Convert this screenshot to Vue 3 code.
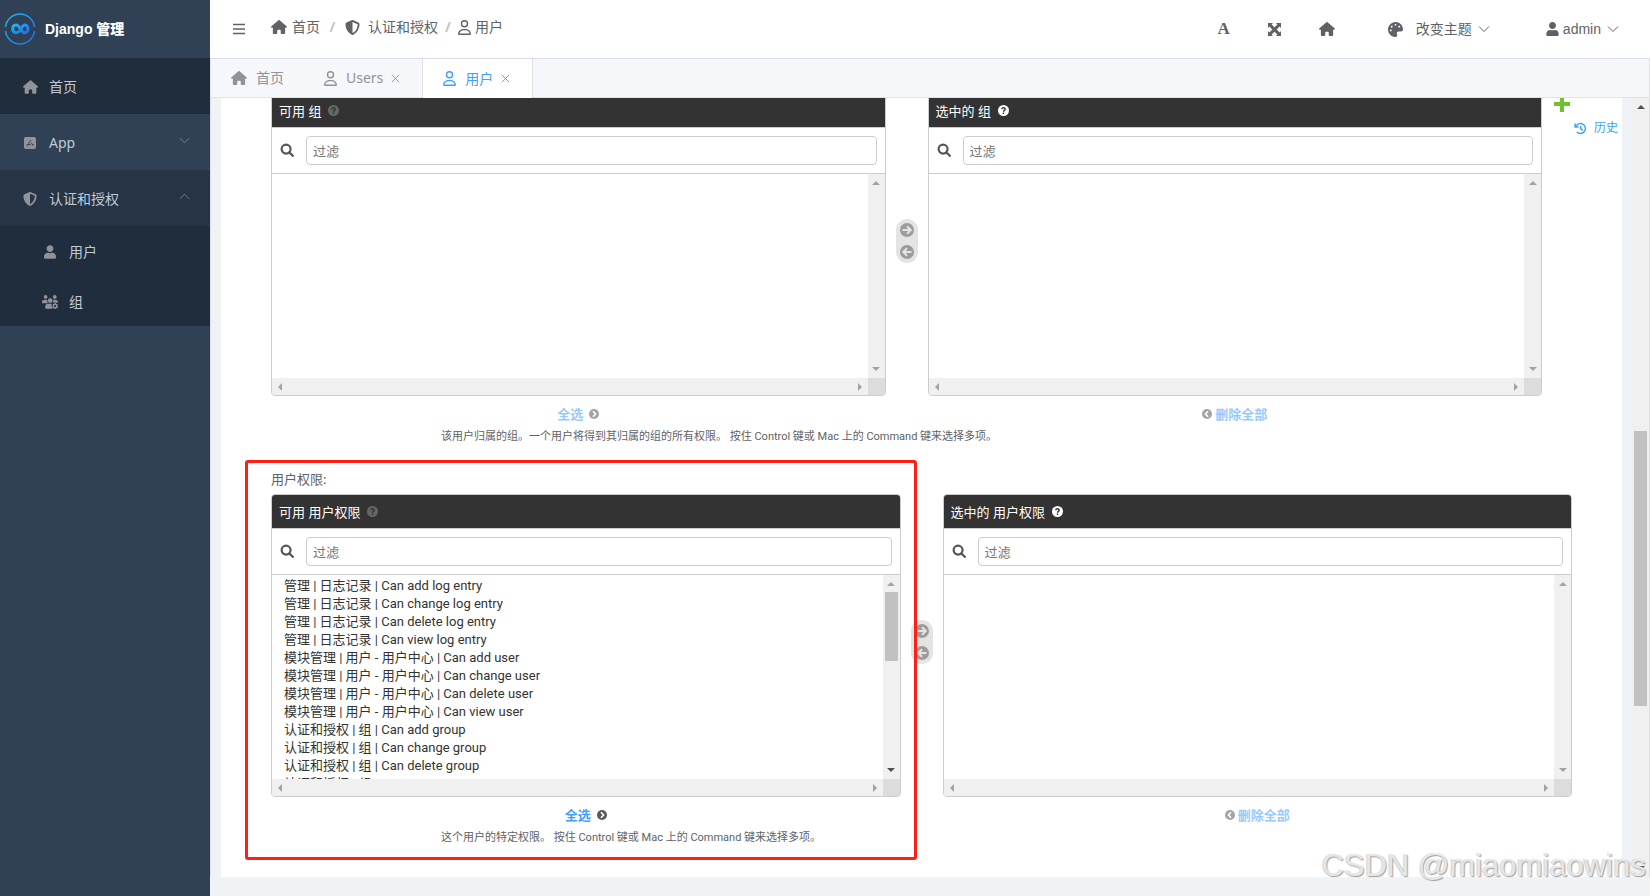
<script setup>
import { ref, h } from 'vue'

const shapes = {
  home: ['0 0 576 512', 'M575.8 255.5c0 18-15 32.1-32 32.1h-32l.7 160.2c0 2.7-.2 5.4-.5 8.1V472c0 22.1-17.9 40-40 40H456c-1.1 0-2.2 0-3.3-.1c-1.4 .1-2.8 .1-4.2 .1H416 392c-22.1 0-40-17.9-40-40V448 384c0-17.7-14.3-32-32-32H256c-17.7 0-32 14.3-32 32v64 24c0 22.1-17.9 40-40 40H160 128.1c-1.5 0-3-.1-4.5-.2c-1.2 .1-2.4 .2-3.6 .2H104c-22.1 0-40-17.9-40-40V360c0-.9 0-1.9 .1-2.8V287.6H32c-18 0-32-14-32-32.1c0-9 3-17 10-24L266.4 8c7-7 15-8 22-8s15 2 21 7L564.8 231.5c8 7 12 15 11 24z'],
  user: ['0 0 448 512', 'M224 256c70.7 0 128-57.3 128-128S294.7 0 224 0 96 57.3 96 128s57.3 128 128 128zm89.6 32h-16.7c-22.2 10.2-46.9 16-72.9 16s-50.6-5.8-72.9-16h-16.7C60.2 288 0 348.2 0 422.4V464c0 26.5 21.5 48 48 48h352c26.5 0 48-21.5 48-48v-41.6c0-74.2-60.2-134.4-134.4-134.4z'],
  person: ['0 0 448 512', 'M304 128a80 80 0 1 0-160 0 80 80 0 1 0 160 0zM96 128a128 128 0 1 1 256 0A128 128 0 1 1 96 128zM49.3 464H398.7c-8.9-63.3-63.3-112-129-112H178.3c-65.7 0-120.1 48.7-129 112zM0 482.3C0 383.8 79.8 304 178.3 304h91.4C368.2 304 448 383.8 448 482.3c0 16.4-13.3 29.7-29.7 29.7H29.7C13.3 512 0 498.7 0 482.3z'],
  shield: ['0 0 512 512', 'M256 0c4.6 0 9.2 1 13.4 2.9L457.7 82.8c22 9.3 38.4 31 38.3 57.2c-.5 99.2-41.3 280.7-213.6 363.2c-16.7 8-36.1 8-52.8 0C57.3 420.7 16.5 239.2 16 140c-.1-26.2 16.3-47.9 38.3-57.2L242.7 2.9C246.8 1 251.4 0 256 0zm0 66.8V444.8C394 378 431.1 230.1 432 141.4L256 66.8z'],
  palette: ['0 0 512 512', 'M204.3 5C104.9 24.4 24.8 104.3 5.2 203.4c-37 187 131.7 326.4 258.8 306.7 41.2-6.4 61.4-54.6 42.5-91.7-23.1-45.4 9.9-98.4 60.9-98.4h79.7c35.8 0 64.8-29.6 64.9-65.3C511.5 97.1 368.1-26.9 204.3 5zM96 320c-17.7 0-32-14.3-32-32s14.3-32 32-32 32 14.3 32 32-14.3 32-32 32zm32-128c-17.7 0-32-14.3-32-32s14.3-32 32-32 32 14.3 32 32-14.3 32-32 32zm128-64c-17.7 0-32-14.3-32-32s14.3-32 32-32 32 14.3 32 32-14.3 32-32 32zm128 64c-17.7 0-32-14.3-32-32s14.3-32 32-32 32 14.3 32 32-14.3 32-32 32z'],
  expand: ['0 0 14 14', 'M0 0H5.4L3.9 1.5 7 4.6 10.1 1.5 8.6 0H14V5.4L12.5 3.9 9.4 7 12.5 10.1 14 8.6V14H8.6L10.1 12.5 7 9.4 3.9 12.5 5.4 14H0V8.6L1.5 10.1 4.6 7 1.5 3.9 0 5.4Z'],
  group: ['0 0 16 14', 'M3.6 0a1.9 1.9 0 1 1 0 3.8a1.9 1.9 0 1 1 0-3.8zM12.8 0a1.9 1.9 0 1 1 0 3.8a1.9 1.9 0 1 1 0-3.8zM8.2 3.2a2.4 2.4 0 1 1 0 4.8a2.4 2.4 0 1 1 0-4.8zM2.4 4.8H4.8L5.4 5.2C5 6.600 5.600 7.600 6 8.200H0.500C0 8.200 0 7.900 0 7.500A2.500 2.500 0 0 1 2.400 4.800zM11.400 4.800H13.600A2.500 2.500 0 0 1 16 7.200L14.600 8 13 7.300 11.200 8 10.700 8C11.400 7 11.400 6 11.100 5.200zM6.400 8.800H9.800L9.400 10.400 10.600 13.800H4C3.500 13.800 3.200 13.500 3.200 13V12A3.200 3.200 0 0 1 6.400 8.800zM12.500 8H13.700L14 9 15.200 9 16 10.200 15.400 11.100 16 12 15.200 13.200 14 13.200 13.700 14H12.500L12.200 13.200 11 13.200 10.300 12 10.900 11.100 10.300 10.200 11 9 12.200 9zM13.100 10a1.100 1.100 0 1 0 0 2.200a1.100 1.100 0 1 0 0-2.200z'],
  store: ['0 0 14 14', 'M2 0H12A2 2 0 0 1 14 2V12A2 2 0 0 1 12 14H2A2 2 0 0 1 0 12V2A2 2 0 0 1 2 0zM6.500 3.300L7 4.600 4.500 8.600H2.800V9.500H8.200L7.700 8.600H5.600L8 4.400 7.600 3.300 7.200 3.800zM8.600 6L8.200 7 10 10.300 10.800 10 10.300 9.500H11.300V8.600H9.900zM3.700 10.100L3.300 11 4 11 4.500 10.100z']
}
const strokes = {
  menu: ['0 0 12 12', 'M0 1.500H12M0 6H12M0 10.500H12', 1.4],
  down: ['0 0 12 12', 'M1 3.500L6 8.500L11 3.500', 1],
  up: ['0 0 12 12', 'M1 8.500L6 3.500L11 8.500', 1],
  close: ['0 0 12 12', 'M2 2L10 10M10 2L2 10', 1],
  search: ['0 0 16 16', 'M6.500 1.700a4.800 4.800 0 1 0 0 9.600a4.800 4.800 0 1 0 0-9.600M10 10L14.400 14.400', 2.300],
  history: ['0 0 14 14', 'M2.300 4.200A5.400 5.400 0 1 1 3 10.800M1.200 1.600V5.300H5M7.300 4.200V7.400L9.400 9', 1.600]
}

const Icon = (props) => {
  const size = { width: props.w, height: props.ht || props.w, 'aria-hidden': 'true' }
  const s = strokes[props.name]
  if (s) return h('svg', { ...size, viewBox: s[0] }, [h('path', { d: s[1], fill: 'none', stroke: 'currentColor', 'stroke-width': s[2] })])
  const f = shapes[props.name]
  return h('svg', { ...size, viewBox: f[0] }, [h('path', { d: f[1], fill: 'currentColor', 'fill-rule': 'evenodd' })])
}
Icon.props = ['name', 'w', 'ht']

const permissions = [
  '管理 | 日志记录 | Can add log entry',
  '管理 | 日志记录 | Can change log entry',
  '管理 | 日志记录 | Can delete log entry',
  '管理 | 日志记录 | Can view log entry',
  '模块管理 | 用户 - 用户中心 | Can add user',
  '模块管理 | 用户 - 用户中心 | Can change user',
  '模块管理 | 用户 - 用户中心 | Can delete user',
  '模块管理 | 用户 - 用户中心 | Can view user',
  '认证和授权 | 组 | Can add group',
  '认证和授权 | 组 | Can change group',
  '认证和授权 | 组 | Can delete group',
  '认证和授权 | 组 | Can view group'
]

const fields = ref([
  {
    key: 'groups', label: '', addable: true, active: false,
    help: '该用户归属的组。一个用户将得到其归属的组的所有权限。 按住 Control 键或 Mac 上的 Command 键来选择多项。',
    panels: [
      { id: 'groups-from', title: '可用 组', dim: true, options: [] },
      { id: 'groups-to', title: '选中的 组', dim: false, options: [] }
    ]
  },
  {
    key: 'perms', label: '用户权限:', addable: false, active: true,
    help: '这个用户的特定权限。 按住 Control 键或 Mac 上的 Command 键来选择多项。',
    panels: [
      { id: 'perms-from', title: '可用 用户权限', dim: true, options: permissions },
      { id: 'perms-to', title: '选中的 用户权限', dim: false, options: [] }
    ]
  }
])
</script>

<template>
  <div class="shell">
    <aside class="sidebar">
      <div class="brand">
        <svg width="32" height="32" viewBox="0 0 32 32" aria-hidden="true">
          <defs>
            <linearGradient id="brandFill" x1="0" y1="0" x2="1" y2="1">
              <stop offset="0" stop-color="#1fb6f5" />
              <stop offset="1" stop-color="#2070ea" />
            </linearGradient>
          </defs>
          <g fill="none" stroke="url(#brandFill)">
            <path d="M1.500 14A14.600 14.600 0 0 1 30.500 14M30.500 18A14.600 14.600 0 0 1 1.500 18" stroke-width="1.500" />
            <path d="M14.500 13.200C13 11.500 9 11.200 8.700 15.500C8.700 20.500 13.500 20.800 15.800 17.500C18 13.800 19 12 21 12C25 12 25 20 20.500 19.800C17.500 19.500 16.500 14.500 14 13" stroke-width="3" />
          </g>
        </svg>
        <strong>Django 管理</strong>
      </div>
      <nav class="menu">
        <a href="#home" class="item first"><span class="ico"><Icon name="home" w="15" ht="14" /></span>首页</a>
        <a href="#app" class="item"><span class="ico"><Icon name="store" w="12" /></span>App<Icon class="caret" name="down" w="11" /></a>
        <a href="#auth" class="item open"><span class="ico"><Icon name="shield" w="14" /></span>认证和授权<Icon class="caret" name="up" w="11" /></a>
        <a href="#users" class="item sub"><span class="ico"><Icon name="user" w="12" ht="14" /></span>用户</a>
        <a href="#groups" class="item sub"><span class="ico"><Icon name="group" w="16" ht="14" /></span>组</a>
      </nav>
    </aside>

    <div class="main">
      <header class="topbar">
        <button class="plain" aria-label="menu"><Icon name="menu" w="12" /></button>
        <nav class="crumbs">
          <a href="#home"><Icon name="home" w="16" ht="14" />首页</a>
          <span class="slash">/</span>
          <a href="#auth" class="wide"><Icon name="shield" w="15" />认证和授权</a>
          <span class="slash">/</span>
          <a href="#users" class="tight"><Icon name="person" w="13" ht="15" />用户</a>
        </nav>
        <div class="tools">
          <button class="plain letter" aria-label="font">A</button>
          <button class="plain" aria-label="fullscreen"><Icon name="expand" w="13" /></button>
          <button class="plain" aria-label="home"><Icon name="home" w="16" ht="14" /></button>
          <button class="plain theme"><Icon name="palette" w="15" /><span>改变主题</span><Icon name="down" w="12" /></button>
          <button class="plain account"><Icon name="user" w="13" ht="14" /><span>admin</span><Icon name="down" w="12" /></button>
        </div>
      </header>

      <nav class="tabs">
        <a href="#home" class="tab"><Icon name="home" w="16" ht="14" />首页</a>
        <a href="#list" class="tab"><Icon name="person" w="13" ht="15" />Users<Icon class="x" name="close" w="11" /></a>
        <a href="#users" class="tab active"><Icon name="person" w="13" ht="15" />用户<Icon class="x" name="close" w="11" /></a>
      </nav>

      <div class="frame">
        <div class="viewport">
          <form class="sheet" @submit.prevent>
            <a href="#history" class="history"><Icon name="history" w="13" />历史</a>
            <section v-for="f in fields" :key="f.key" class="field">
              <div v-if="f.label" class="label">{{ f.label }}</div>
              <div class="pair">
                <template v-for="(p, i) in f.panels" :key="p.id">
                  <div v-if="i === 1" class="chooser">
                    <button type="button" aria-label="add">
                      <svg width="14" height="14" viewBox="0 0 14 14"><circle cx="7" cy="7" r="7" fill="#9c9c9c" /><path d="M2.500 7H10.500M7 3.200L10.800 7L7 10.800" fill="none" stroke="#e4e4e4" stroke-width="2" /></svg>
                    </button>
                    <button type="button" aria-label="remove">
                      <svg width="14" height="14" viewBox="0 0 14 14"><circle cx="7" cy="7" r="7" fill="#9c9c9c" /><path d="M11.500 7H3.500M7 3.200L3.200 7L7 10.800" fill="none" stroke="#e4e4e4" stroke-width="2" /></svg>
                    </button>
                  </div>
                  <div class="column">
                    <div class="panel">
                      <h2>
                        {{ p.title }}
                        <svg class="help-dot" :class="{ dim: p.dim }" width="11" height="11" viewBox="0 0 12 12" aria-hidden="true">
                          <circle cx="6" cy="6" r="6" fill="currentColor" />
                          <path d="M4.200 4.700C4.200 2.300 7.900 2.500 7.800 4.600C7.800 5.900 6 5.800 6 7.300M6 8.300V9.800" fill="none" stroke="#333" stroke-width="1.500" />
                        </svg>
                      </h2>
                      <div class="filter">
                        <label :for="p.id + '-filter'" :aria-label="p.title"><Icon name="search" w="15" /></label>
                        <input :id="p.id + '-filter'" type="text" placeholder="过滤" />
                      </div>
                      <div class="list">
                        <select multiple :aria-label="p.title">
                          <option v-for="o in p.options" :key="o">{{ o }}</option>
                        </select>
                        <div class="vbar">
                          <i class="tri t-up"></i>
                          <div v-if="p.options.length" class="thumb"></div>
                          <i class="tri t-down" :class="{ dark: p.options.length }"></i>
                        </div>
                        <div class="hbar"><i class="tri t-left"></i><i class="tri t-right"></i></div>
                        <div class="corner"></div>
                      </div>
                    </div>
                    <a v-if="i === 0" href="#all" class="bulk" :class="{ off: !f.active }">全选
                      <svg width="10" height="10" viewBox="0 0 10 10" aria-hidden="true"><circle cx="5" cy="5" r="5" fill="#5a5a5a" /><path d="M4 2.300L6.600 5L4 7.700" fill="none" stroke="#fff" stroke-width="1.600" /></svg>
                    </a>
                    <a v-else href="#none" class="bulk clear off">
                      <svg width="10" height="10" viewBox="0 0 10 10" aria-hidden="true"><circle cx="5" cy="5" r="5" fill="#5a5a5a" /><path d="M6 2.300L3.400 5L6 7.700" fill="none" stroke="#fff" stroke-width="1.600" /></svg>
                      删除全部</a>
                  </div>
                </template>
                <a v-if="f.addable" href="#add" class="plus" aria-label="add">
                  <svg width="16" height="16" viewBox="0 0 16 16"><path d="M6 0H10V6H16V10H10V16H6V10H0V6H6Z" fill="#70bf2b" /></svg>
                </a>
              </div>
              <p class="help">{{ f.help }}</p>
              <div v-if="f.active" class="marker"></div>
            </section>
          </form>
        </div>
        <div class="pagebar">
          <i class="tri t-up dark"></i>
          <div class="page-thumb"></div>
          <i class="tri t-down dark"></i>
        </div>
      </div>
    </div>
    <div class="watermark">CSDN @miaomiaowins</div>
  </div>
</template>

<style>
html, body { background: #f0f3f7; }
</style>

<style scoped>
* { box-sizing: border-box; }
.shell { position: relative; display: flex; height: 100vh; overflow: hidden; font: 14px/20px "Noto Sans", "Noto Sans CJK SC", sans-serif; color: #606266; background: #eff3f6; }
.shell svg { display: block; flex: none; }
a { text-decoration: none; color: inherit; }
.sidebar { width: 210px; flex: none; background: #304156; }
.brand { height: 58px; display: flex; align-items: center; gap: 9px; padding-left: 4px; color: #fff; font: bold 14px/20px "Liberation Sans", "Noto Sans CJK SC", sans-serif; }
.menu { display: flex; flex-direction: column; }
.item { display: flex; align-items: center; height: 56px; padding: 1px 20px 0; color: #bfcbd9; }
.item .ico { width: 20px; margin-right: 9px; display: flex; justify-content: center; color: #909399; }
.item.first { background: #202d3c; }
.item.open { background: #263445; }
.item.sub { height: 50px; padding-left: 40px; background: #1f2d3d; }
.caret { margin: 0 0 4px auto; color: #7d8896; }

.main { flex: 1; min-width: 0; display: flex; flex-direction: column; }
.topbar { height: 59px; flex: none; display: flex; align-items: center; background: #fff; border-bottom: 1px solid #d8dce5; padding: 0 31px 0 23px; }
.plain { border: 0; background: none; padding: 0; margin: 0; color: #5f6166; font: 14px/20px "Liberation Sans", "Noto Sans CJK SC", sans-serif; display: flex; align-items: center; }
.crumbs { display: flex; align-items: center; margin-left: 26px; padding-bottom: 4px; }
.crumbs a { display: flex; align-items: center; gap: 5px; }
.crumbs a.wide { gap: 8px; }
.crumbs a.tight { gap: 4px; }
.slash { width: 25px; text-align: center; color: #c0c4cc; font-weight: bold; }
.wide + .slash { width: 20px; }
.tools { margin-left: auto; display: flex; align-items: center; }
.tools .plain { margin-left: 38px; }
.tools .letter { font: bold 17px/20px "Liberation Serif", serif; }
.tools .theme { margin-left: 53px; }
.theme span { margin: 0 6px 0 13px; }
.tools .account { margin-left: 56px; }
.account span { margin: 0 6px 0 4px; }

.tabs { height: 39px; flex: none; display: flex; background: #f5f7fa; border: 1px solid #dfe3ea; border-top: 0; }
.tab { display: flex; align-items: center; gap: 9px; padding: 0 20px; color: #909399; }
.tab .x { margin-left: -2px; margin-right: 1px; }
.tab.active { height: 39px; color: #409eff; background: #fff; border: solid #dcdfe6; border-width: 0 1px; }

.frame { flex: 1; min-height: 0; display: flex; margin-bottom: 19px; padding-left: 10px; border-left: 1px solid #dcdfe6; border-right: 1px solid #dcdfe6; }
.viewport { flex: 1; min-width: 0; overflow: hidden; padding-right: 10px; }
.sheet { position: relative; min-height: 100%; padding: 0 50px 40px; margin-top: -5px; background: #fff; }
.history { position: absolute; top: 25px; right: 4px; display: flex; align-items: center; gap: 7px; font-size: 12px; color: #409eff; }
.field { position: relative; }
.field + .field { margin-top: 24px; }
.label { height: 25px; font-size: 13px; }
.pair { display: flex; }
.column { flex: 1; min-width: 0; }
.panel { border: 1px solid #ccc; border-radius: 4px; overflow: hidden; }
h2 { margin: 0; height: 34px; padding-left: 7px; display: flex; align-items: center; gap: 7px; font-size: 13px; font-weight: 400; color: #fff; background: #333; border-bottom: 1px solid #ccc; }
.help-dot.dim { color: #666; }
.filter { height: 46px; display: flex; align-items: center; gap: 11px; padding: 0 8px; border-bottom: 1px solid #ccc; color: #555; }
.filter input { flex: 1; min-width: 0; height: 29px; border: 1px solid #ccc; border-radius: 4px; padding: 5px 6px; font: 13px/17px "Noto Sans", "Noto Sans CJK SC", sans-serif; outline: 0; }
.filter input::placeholder { color: #757575; }
.list { display: grid; grid-template: 204px 17px / 1fr 17px; }
select { border: 0; padding: 0 10px; margin: 0; width: 100%; height: 100%; overflow: hidden; background: #fff; outline: 0; color: #333; font: 13px/18px Roboto, "Noto Sans CJK SC", sans-serif; }
option { height: 18px; min-height: 18px; padding: 0 2px; line-height: 18px; }
.vbar, .pagebar { display: flex; flex-direction: column; align-items: center; background: #f0f0f0; padding: 7px 0; }
.hbar { display: flex; justify-content: space-between; align-items: center; background: #f0f0f0; padding: 0 6px; }
.corner { background: #dcdcdc; }
.tri { width: 0; height: 0; flex: none; border: 4px solid transparent; }
.t-up { border-top: 0; border-bottom-color: #a3a3a3; }
.t-down { border-bottom: 0; border-top-color: #a3a3a3; margin-top: auto; }
.t-left { border-left: 0; border-right-color: #a3a3a3; }
.t-right { border-right: 0; border-left-color: #a3a3a3; }
.t-up.dark { border-bottom-color: #505050; }
.t-down.dark { border-top-color: #505050; }
.thumb { width: 13px; height: 69px; margin-top: 6px; background: #c1c1c1; }
.pagebar { width: 17px; }
.page-thumb { width: 13px; height: 36%; margin-top: 322px; background: #c1c1c1; }
.chooser { width: 22px; height: 44px; margin: 126px 10px 0; flex: none; display: flex; flex-direction: column; justify-content: space-around; align-items: center; background: #e4e4e4; border-radius: 11px; }
.chooser button { border: 0; background: none; padding: 0; }
.plus { width: 16px; margin: 3px 2px 0 12px; }
.bulk { display: flex; justify-content: center; align-items: center; gap: 6px; margin-top: 8px; font-size: 13px; font-weight: bold; color: #409eff; }
.bulk.clear { gap: 3px; }
.bulk.off { opacity: 0.55; }
.help { margin: 5px 0 0 170px; font: 11px/16px Roboto, "Noto Sans CJK SC", sans-serif; }
.marker { position: absolute; top: -9px; left: -26px; width: 672px; height: 400px; border: 3px solid #ff2015; border-radius: 3px; pointer-events: none; }
.watermark { position: absolute; right: 4px; bottom: 12px; font: 31px/36px "Liberation Sans", sans-serif; color: rgba(238, 238, 238, 0.9); text-shadow: 1px 1px 1px #a0a0a0, -1px 0 1px #d4d4d4; pointer-events: none; }
</style>
